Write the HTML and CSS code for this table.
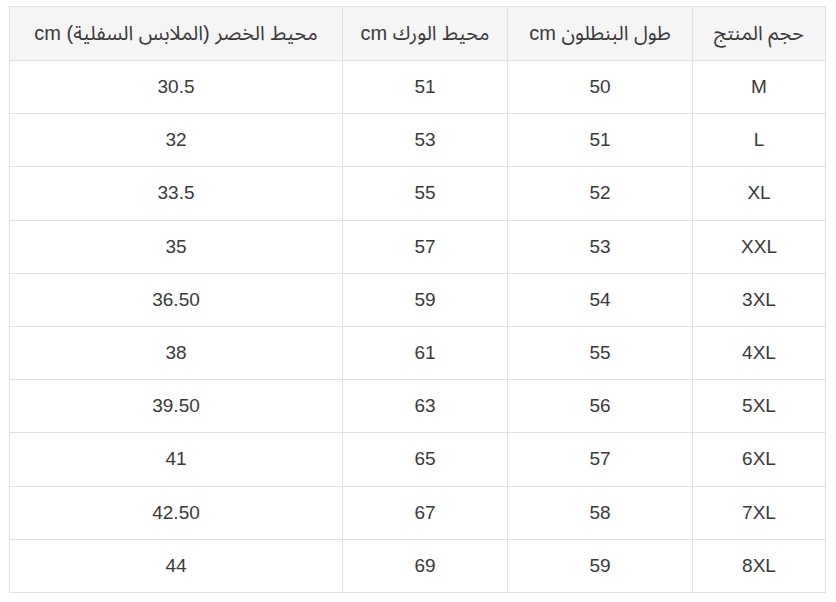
FILE: index.html
```html
<!DOCTYPE html>
<html lang="ar" dir="rtl">
<head>
<meta charset="utf-8">
<link rel="stylesheet" href="styles.css">
</head>
<body>
<table class="size-table">
  <colgroup>
    <col class="c-size">
    <col class="c-len">
    <col class="c-hip">
    <col class="c-waist">
  </colgroup>
  <thead>
    <tr>
      <th>حجم المنتج</th>
      <th>طول البنطلون cm</th>
      <th>محيط الورك cm</th>
      <th>محيط الخصر (الملابس السفلية) cm</th>
    </tr>
  </thead>
  <tbody>
    <tr><td>M</td><td>50</td><td>51</td><td>30.5</td></tr>
    <tr><td>L</td><td>51</td><td>53</td><td>32</td></tr>
    <tr><td>XL</td><td>52</td><td>55</td><td>33.5</td></tr>
    <tr><td>XXL</td><td>53</td><td>57</td><td>35</td></tr>
    <tr><td>3XL</td><td>54</td><td>59</td><td>36.50</td></tr>
    <tr><td>4XL</td><td>55</td><td>61</td><td>38</td></tr>
    <tr><td>5XL</td><td>56</td><td>63</td><td>39.50</td></tr>
    <tr><td>6XL</td><td>57</td><td>65</td><td>41</td></tr>
    <tr><td>7XL</td><td>58</td><td>67</td><td>42.50</td></tr>
    <tr><td>8XL</td><td>59</td><td>69</td><td>44</td></tr>
  </tbody>
</table>
</body>
</html>
```
FILE: styles.css
```css
html, body {
  margin: 0;
  padding: 0;
  background: #ffffff;
}
body {
  padding: 6px 10px 0 11px;
  font-family: "Liberation Sans", "Noto Sans Arabic", "Noto Naskh Arabic", "DejaVu Sans", sans-serif;
  color: #3a3a3a;
}
.size-table {
  width: 816px;
  border-collapse: collapse;
  table-layout: fixed;
  font-size: 19px;
}
.c-size { width: 133px; }
.c-len { width: 185px; }
.c-hip { width: 165px; }
.c-waist { width: 333px; }
.size-table th,
.size-table td {
  border: 1px solid #e1e1e1;
  text-align: center;
  vertical-align: middle;
  padding: 0;
  font-weight: normal;
}
.size-table th {
  background: #f5f5f5;
  height: 53px;
  font-size: 20px;
}
.size-table td {
  height: 52.2px;
}
```
